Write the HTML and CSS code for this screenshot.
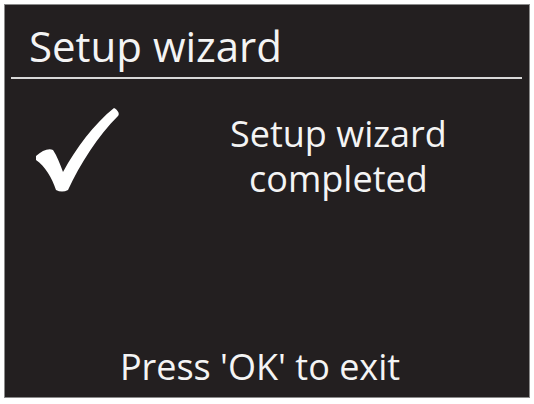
FILE: index.html
```html
<!DOCTYPE html>
<html lang="en">

<head>
    <meta charset="UTF-8">
    <title>Setup wizard</title>
    <link rel="stylesheet" href="styles.css">
</head>

<body>
    <div class="screen">
        <div class="title">Setup wizard</div>
        <div class="rule"></div>
        <div class="content">
            <svg class="tick" viewBox="0 0 84 86" width="84" height="86">
                <path d="M0 50 C6 45 12 42 17 44 C21 50 24 58 27 66 C40 42 58 18 78 2 C82 4 84 8 82 10 C62 30 44 58 32 84 C28 86 24 86 20 84 C16 72 9 60 0 54 Z" fill="#fff" />
            </svg>
            <div class="message">Setup wizard<br>completed</div>
        </div>
        <div class="footer">Press 'OK' to exit</div>
    </div>
</body>

</html>
```

FILE: styles.css
```css
body {
    margin: 0;
    background: #fff;
    font-family: "Open Sans", "Noto Sans", sans-serif;
    color: #f4f4f4;
}

.screen {
    width: 526px;
    height: 394px;
    margin: 4px;
    background: #231f20;
    border: 1px solid #8a8a8a;
    box-sizing: border-box;
    display: flex;
    flex-direction: column;
}

.title {
    font-size: 42px;
    line-height: 1;
    padding: 20px 0 0 24px;
    height: 52px;
}

.rule {
    height: 2px;
    background: #d8d8d8;
    margin: 0 7px 0 6px;
}

.content {
    display: flex;
    align-items: flex-start;
    padding: 24px 0 0 31px;
}

.tick {
    margin-top: 3px;
}

.message {
    font-size: 36px;
    line-height: 45px;
    text-align: center;
    margin-left: 110px;
    margin-top: 8px;
}

.footer {
    margin-top: auto;
    font-size: 36px;
    line-height: 1;
    text-align: center;
    padding: 0 14px 12px 0;
}
```
